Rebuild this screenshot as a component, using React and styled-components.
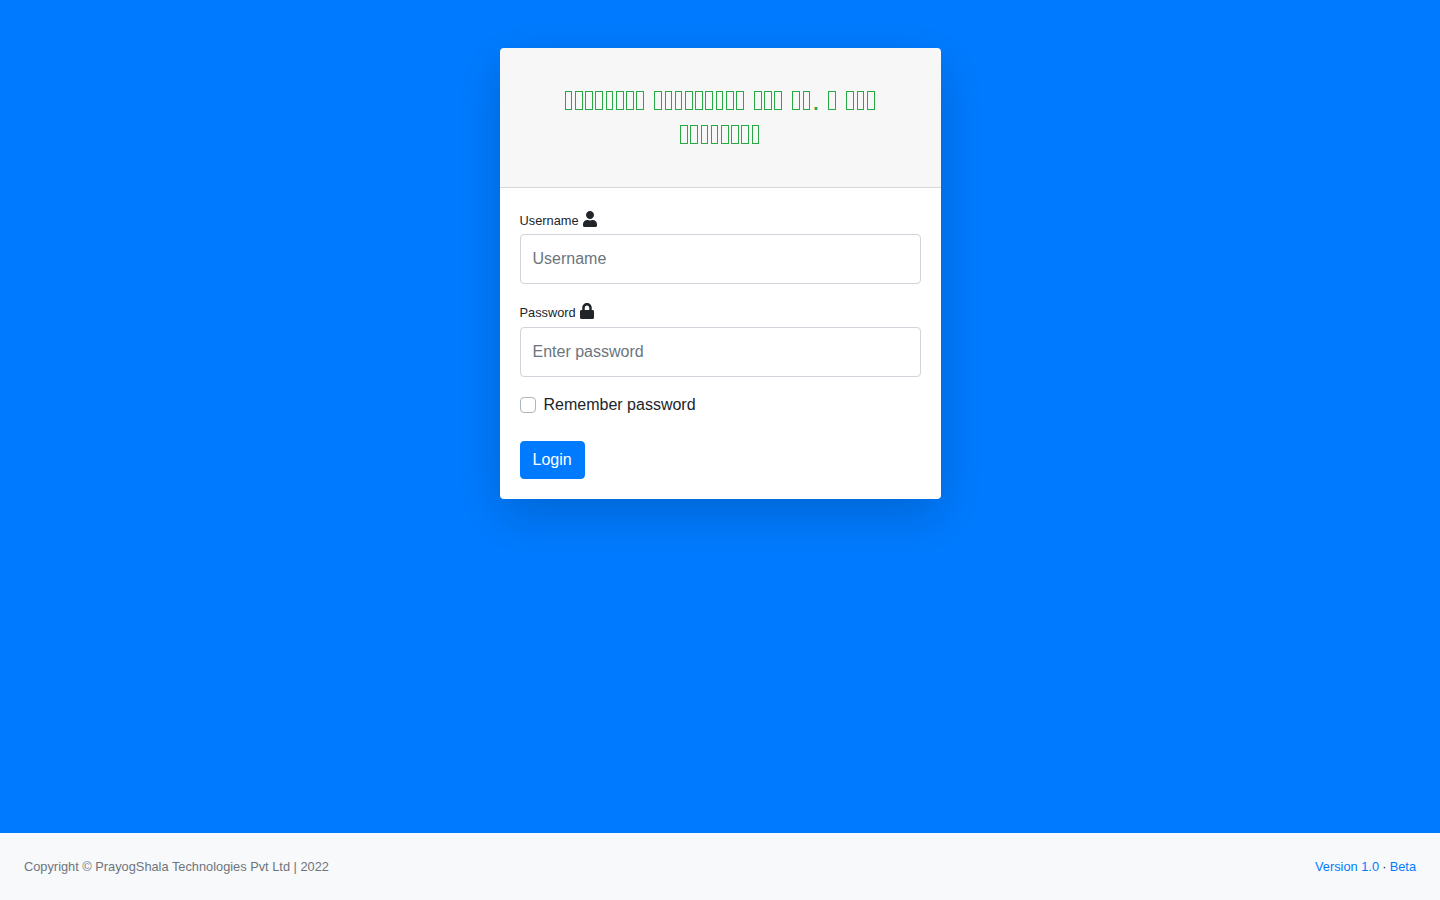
import React from "react";
import styled, { createGlobalStyle } from "styled-components";
import { FaUser, FaLock } from "react-icons/fa";

const GlobalStyle = createGlobalStyle`
  *, *::before, *::after { box-sizing: border-box; }
  body {
    margin: 0;
    background: #007bff;
    color: #212529;
    font: 400 16px/1.5 "Liberation Sans", Arial, sans-serif;
  }
`;

const Page = styled.div`
  display: flex;
  flex-direction: column;
  min-height: 100vh;
`;

const Main = styled.main`
  flex: 1;
  display: flex;
  justify-content: center;
  align-items: flex-start;
  padding-top: 48px;
`;

const Card = styled.section`
  width: 441px;
  background: #fff;
  border-radius: 4px;
  box-shadow: 0 16px 48px rgba(0, 0, 0, 0.175);
`;

const CardHeader = styled.header`
  padding: 12px 20px;
  background: rgba(0, 0, 0, 0.03);
  border-bottom: 1px solid rgba(0, 0, 0, 0.125);
  border-radius: 4px 4px 0 0;
`;

const Title = styled.h3`
  margin: 24px 0;
  padding: 0 8px;
  color: #28a745;
  font-size: 28px;
  font-weight: 400;
  line-height: 1.2;
  text-align: center;
`;

const Word = styled.span`
  white-space: nowrap;
`;

const EmptyGlyph = styled.span`
  display: inline-block;
  width: 7.7px;
  height: 19px;
  margin: 0 1.6px 0 0.94px;
  border: 1px solid #28a745;
`;

const Form = styled.form`
  padding: 20px;
`;

const Field = styled.div`
  margin-bottom: 16px;
`;

const Label = styled.label`
  display: flex;
  align-items: flex-start;
  gap: 4px;
  height: 26.2px;
  padding-top: 3px;
  font-size: 12.8px;
  line-height: 19.2px;

  svg {
    width: 14px;
    height: 16px;
  }
`;

const Input = styled.input`
  display: block;
  width: 100%;
  height: 50px;
  padding: 16px 12px;
  border: 1px solid #ced4da;
  border-radius: 4px;
  background: #fff;
  color: #495057;
  font: inherit;

  &::placeholder {
    color: #6c757d;
    opacity: 1;
  }
`;

const CheckRow = styled.label`
  display: flex;
  align-items: center;
  gap: 8px;
  height: 24px;
`;

const Checkbox = styled.input`
  appearance: none;
  width: 16px;
  height: 16px;
  margin: 0;
  border: 1px solid #adb5bd;
  border-radius: 4px;
  background: #fff;

  &:checked {
    background: #007bff;
    border-color: #007bff;
  }
`;

const LoginButton = styled.button`
  display: block;
  height: 38px;
  margin-top: 24px;
  padding: 6px 12px;
  border: 1px solid #007bff;
  border-radius: 4px;
  background: #007bff;
  color: #fff;
  font: inherit;
`;

const Footer = styled.footer`
  display: flex;
  justify-content: space-between;
  padding: 24px;
  background: #f8f9fa;
  font-size: 12.8px;
`;

const Copyright = styled.div`
  color: #6c757d;
`;

const FooterLinks = styled.div`
  display: flex;
  gap: 3.2px;
`;

const FooterLink = styled.a`
  color: #007bff;
  text-decoration: none;
`;

// Each title word is a run of empty glyph boxes, optionally closed by punctuation.
const titleWords = [
  { boxes: 8 },
  { boxes: 9 },
  { boxes: 3 },
  { boxes: 2, end: "." },
  { boxes: 1 },
  { boxes: 3 },
  { boxes: 8 },
];

export default function App() {
  return (
    <Page>
      <GlobalStyle />
      <Main>
        <Card>
          <CardHeader>
            <Title>
              {titleWords.map(({ boxes, end }, i) => (
                <React.Fragment key={i}>
                  <Word>
                    {Array.from({ length: boxes }, (_, n) => (
                      <EmptyGlyph key={n} />
                    ))}
                    {end}
                  </Word>{" "}
                </React.Fragment>
              ))}
            </Title>
          </CardHeader>
          <Form onSubmit={(e) => e.preventDefault()}>
            <Field>
              <Label htmlFor="username">Username <FaUser /></Label>
              <Input id="username" type="text" placeholder="Username" />
            </Field>
            <Field>
              <Label htmlFor="password">Password <FaLock /></Label>
              <Input id="password" type="password" placeholder="Enter password" />
            </Field>
            <CheckRow>
              <Checkbox type="checkbox" />
              Remember password
            </CheckRow>
            <LoginButton type="submit">Login</LoginButton>
          </Form>
        </Card>
      </Main>
      <Footer>
        <Copyright>Copyright © PrayogShala Technologies Pvt Ltd | 2022</Copyright>
        <FooterLinks>
          <FooterLink href="#">Version 1.0</FooterLink>
          <span>·</span>
          <FooterLink href="#">Beta</FooterLink>
        </FooterLinks>
      </Footer>
    </Page>
  );
}
